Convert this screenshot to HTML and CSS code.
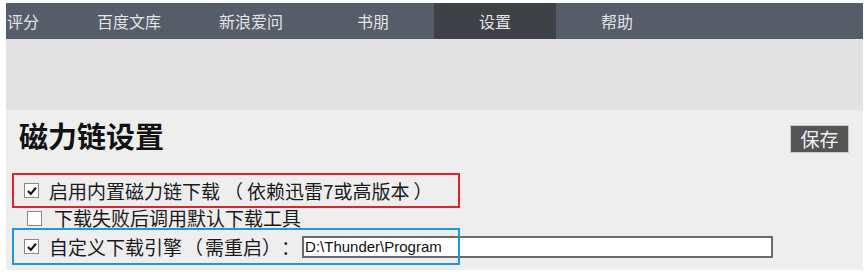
FILE: index.html
```html
<!DOCTYPE html>
<html lang="zh-CN">
<head>
<meta charset="utf-8">
<title>磁力链设置</title>
<link rel="stylesheet" href="styles.css">
</head>
<body>
<div class="frame">
  <nav class="nav">
    <a class="tab tab-first">评分</a>
    <a class="tab">百度文库</a>
    <a class="tab">新浪爱问</a>
    <a class="tab">书朋</a>
    <a class="tab active">设置</a>
    <a class="tab">帮助</a>
  </nav>
  <div class="banner"></div>
  <section class="panel">
    <div class="header">
      <h1 class="title">磁力链设置</h1>
      <button class="save">保存</button>
    </div>
    <div class="opt boxed red">
      <span class="cb"><svg viewBox="0 0 12 12" width="12" height="12"><path d="M2 6 L4.8 8.9 L10 2.6" fill="none" stroke="#111" stroke-width="2.2"/></svg></span>
      <span class="label">启用内置磁力链下载<span class="paren">（</span>依赖迅雷7或高版本<span class="paren">）</span></span>
    </div>
    <div class="opt plain">
      <span class="cb"></span>
      <span class="label">下载失败后调用默认下载工具</span>
    </div>
    <div class="opt boxed blue">
      <span class="cb"><svg viewBox="0 0 12 12" width="12" height="12"><path d="M2 6 L4.8 8.9 L10 2.6" fill="none" stroke="#111" stroke-width="2.2"/></svg></span>
      <span class="label">自定义下载引擎<span class="paren-sm">（</span>需重启）：</span>
      <span class="field">D:\Thunder\Program</span>
    </div>
  </section>
</div>
</body>
</html>
```

FILE: styles.css
```css
html, body {
  margin: 0;
  padding: 0;
  background: #ffffff;
}

body {
  font-family: "Noto Sans CJK SC", "Noto Sans", sans-serif;
  color: #1a1a1a;
  text-spacing-trim: space-all;
}

.frame {
  margin: 3px 0 0 6px;
  width: 857px;
}

.nav {
  display: flex;
  height: 36px;
  background: #575d68;
  overflow: hidden;
}

.tab {
  flex: 0 0 122px;
  display: flex;
  align-items: center;
  justify-content: center;
  font-size: 16px;
  color: #e2e4e7;
  text-decoration: none;
}

.tab-first {
  flex-basis: 62px;
  justify-content: flex-start;
  padding-left: 1px;
  box-sizing: border-box;
}

.tab.active {
  background: #3e4146;
}

.banner {
  height: 71px;
  background: #e2e2e2;
}

.panel {
  background: #eeeeee;
  height: 160px;
  padding: 0 6px;
}

.header {
  display: flex;
  justify-content: space-between;
  align-items: flex-start;
  height: 63px;
}

.title {
  margin: 5px 0 0 0;
  padding-left: 7px;
  font-size: 29px;
  line-height: 40px;
  font-weight: bold;
  color: #111;
}

.save {
  margin: 15px 8px 0 0;
  width: 59px;
  height: 28px;
  padding: 0;
  border: 1px solid #c8c8c8;
  background: #545454;
  color: #f0f0f0;
  font-family: inherit;
  font-size: 19px;
  line-height: 26px;
}

.opt {
  position: relative;
  display: flex;
  align-items: center;
  width: 448px;
  box-sizing: border-box;
  font-size: 19px;
  white-space: nowrap;
}

.boxed::after {
  content: "";
  position: absolute;
  inset: 0;
  border: 2px solid;
  pointer-events: none;
}

.red {
  height: 35px;
  padding-left: 12px;
}

.red::after {
  border-color: #e2222e;
}

.plain {
  height: 20px;
  padding-left: 15px;
}

.blue {
  height: 37px;
  padding-left: 12px;
}

.blue::after {
  border-color: #1a9ad8;
}

.cb {
  flex: 0 0 auto;
  width: 13px;
  height: 13px;
  border: 1px solid #8a8a8a;
  background: #ffffff;
  display: flex;
  align-items: center;
  justify-content: center;
  margin-right: 10px;
}

.plain .cb {
  margin-right: 12px;
}

.label {
  line-height: 20px;
}

.paren {
  margin: 0 4px;
}

.paren-sm {
  margin: 0 2px;
}

.field {
  flex: 0 0 auto;
  box-sizing: border-box;
  width: 471px;
  height: 22px;
  margin-left: 2px;
  border: 2px solid #6b6b6b;
  background: #ffffff;
  font-family: "Liberation Sans", Arial, sans-serif;
  font-size: 15px;
  line-height: 18px;
  padding-left: 1px;
  color: #111;
}
```
